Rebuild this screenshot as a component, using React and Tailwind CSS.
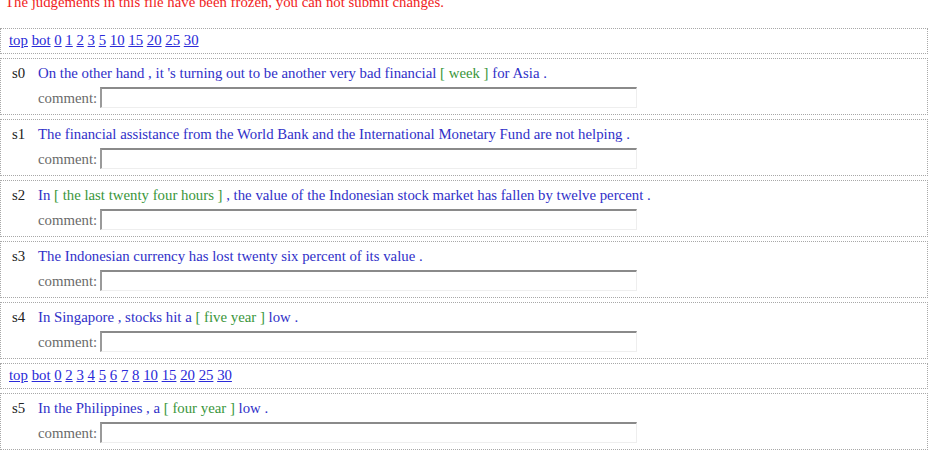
import React from "react";

const serif = { fontFamily: '"Liberation Serif", "Times New Roman", serif' };

const sentences = [
  { id: "s0", parts: ["On the other hand , it 's turning out to be another very bad financial ", ["[ week ]"], " for Asia ."] },
  { id: "s1", parts: ["The financial assistance from the World Bank and the International Monetary Fund are not helping ."] },
  { id: "s2", parts: ["In ", ["[ the last twenty four hours ]"], " , the value of the Indonesian stock market has fallen by twelve percent ."] },
  { id: "s3", parts: ["The Indonesian currency has lost twenty six percent of its value ."] },
  { id: "s4", parts: ["In Singapore , stocks hit a ", ["[ five year ]"], " low ."] },
];

const last = { id: "s5", parts: ["In the Philippines , a ", ["[ four year ]"], " low ."] };

const NavBar = ({ links }) => (
  <div className="border border-dotted border-[#a8a8a8] h-[26px] pl-[8px] pt-[2px] text-[14.8px] leading-[18px]">
    {links.map((l, i) => (
      <React.Fragment key={l}>
        <a href="#" className="text-[#2a2ad8] underline">{l}</a>
        {i < links.length - 1 ? " " : ""}
      </React.Fragment>
    ))}
  </div>
);

const Sentence = ({ s }) => (
  <div className="border border-dotted border-[#a8a8a8] h-[57px] pt-[5px] text-[14.8px] leading-[18px]">
    <div className="flex">
      <span className="w-[37px] pl-[11px] text-[#222]">{s.id}</span>
      <span className="text-[#3030c8]">
        {s.parts.map((p, i) =>
          Array.isArray(p) ? (
            <span key={i} className="text-[#3a963a]">{p[0]}</span>
          ) : (
            <span key={i}>{p}</span>
          )
        )}
      </span>
    </div>
    <div className="flex items-center pl-[37px] mt-[5px]">
      <span className="text-[#6a6a6a] w-[62px]">comment:</span>
      <input
        type="text"
        className="w-[537px] h-[21px] border-t-2 border-l-2 border-r border-b border-t-[#8a8a8a] border-l-[#9a9a9a] border-r-[#eeeeee] border-b-[#eeeeee] bg-white outline-none"
      />
    </div>
  </div>
);

export default function App() {
  return (
    <div className="bg-white h-[458px] overflow-hidden pr-[5px]" style={serif}>
      <p className="text-[#f01c1c] text-[14.8px] leading-[18px] mt-[-7px] pl-[5px]">
        The judgements in this file have been frozen, you can not submit changes.
      </p>
      <div className="mt-[17px] flex flex-col gap-[4px]">
        <NavBar links={["top", "bot", "0", "1", "2", "3", "5", "10", "15", "20", "25", "30"]} />
        {sentences.map((s) => (
          <Sentence key={s.id} s={s} />
        ))}
        <NavBar links={["top", "bot", "0", "2", "3", "4", "5", "6", "7", "8", "10", "15", "20", "25", "30"]} />
        <Sentence s={last} />
      </div>
    </div>
  );
}
